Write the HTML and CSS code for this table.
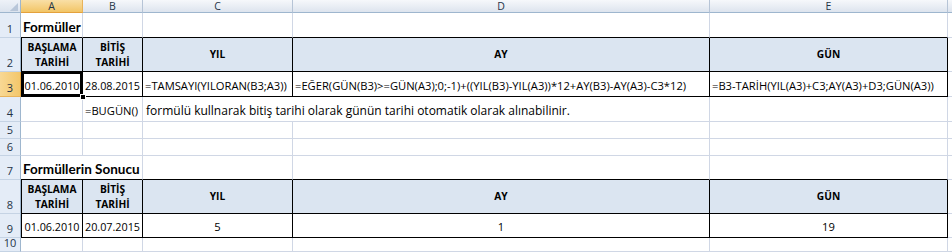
FILE: index.html
```html
<!DOCTYPE html>
<html lang="tr">
<head>
<meta charset="utf-8">
<title>Formüller</title>
<link rel="stylesheet" href="styles.css">
</head>
<body>
<div class="sheet">
  <div class="corner"><svg class="tri" width="10" height="10" viewBox="0 0 10 10"><polygon points="10,1 10,10 1,10" fill="#b8c6d9"/></svg></div>
  <div class="ch selh">A</div>
  <div class="ch">B</div>
  <div class="ch">C</div>
  <div class="ch">D</div>
  <div class="ch">E</div>
  <div class="ch"></div>

  <div class="rh">1</div>
  <div class="c title above">Formüller</div>
  <div class="c above"></div>
  <div class="c above"></div>
  <div class="c above"></div>
  <div class="c above"></div>
  <div class="c"></div>

  <div class="rh">2</div>
  <div class="c t l th">BAŞLAMA<br>TARİHİ</div>
  <div class="c t th">BİTİŞ<br>TARİHİ</div>
  <div class="c t th">YIL</div>
  <div class="c t th">AY</div>
  <div class="c t th">GÜN</div>
  <div class="c"></div>

  <div class="rh selh">3</div>
  <div class="c t l active ctr date">01.06.2010<span class="handle"></span></div>
  <div class="c t ctr date">28.08.2015</div>
  <div class="c t">=TAMSAYI(YILORAN(B3;A3))</div>
  <div class="c t">=EĞER(GÜN(B3)&gt;=GÜN(A3);0;-1)+((YIL(B3)-YIL(A3))*12+AY(B3)-AY(A3)-C3*12)</div>
  <div class="c t">=B3-TARİH(YIL(A3)+C3;AY(A3)+D3;GÜN(A3))</div>
  <div class="c"></div>

  <div class="rh">4</div>
  <div class="c"></div>
  <div class="c">=BUGÜN()</div>
  <div class="c span2 note">formülü kullnarak bitiş tarihi olarak günün tarihi otomatik olarak alınabilinir.</div>
  <div class="c"></div>
  <div class="c"></div>

  <div class="rh">5</div>
  <div class="c"></div><div class="c"></div><div class="c"></div><div class="c"></div><div class="c"></div><div class="c"></div>

  <div class="rh">6</div>
  <div class="c"></div><div class="c"></div><div class="c"></div><div class="c"></div><div class="c"></div><div class="c"></div>

  <div class="rh">7</div>
  <div class="c title above span2">Formüllerin Sonucu</div>
  <div class="c above"></div>
  <div class="c above"></div>
  <div class="c above"></div>
  <div class="c"></div>

  <div class="rh">8</div>
  <div class="c t l th">BAŞLAMA<br>TARİHİ</div>
  <div class="c t th">BİTİŞ<br>TARİHİ</div>
  <div class="c t th">YIL</div>
  <div class="c t th">AY</div>
  <div class="c t th">GÜN</div>
  <div class="c"></div>

  <div class="rh">9</div>
  <div class="c t l ctr date">01.06.2010</div>
  <div class="c t ctr date">20.07.2015</div>
  <div class="c t ctr">5</div>
  <div class="c t ctr">1</div>
  <div class="c t ctr">19</div>
  <div class="c"></div>

  <div class="rh">10</div>
  <div class="c"></div><div class="c"></div><div class="c"></div><div class="c"></div><div class="c"></div><div class="c"></div>
</div>
</body>
</html>
```

FILE: styles.css
```css
* { box-sizing: border-box; }
html, body { margin: 0; padding: 0; background: #fff; }
body { width: 952px; height: 252px; overflow: hidden; font-family: "Open Sans", "Liberation Sans", sans-serif; }

.sheet {
  display: grid;
  grid-template-columns: 21px 62px 60px 150px 417px 238px 1fr;
  grid-template-rows: 13px 25px 34px 25px 25px 17px 17px 24px 34px 24px 14px;
  width: 952px;
  height: 252px;
  font-size: 11.2px;
  color: #000;
}

.corner {
  background: linear-gradient(#eef2f8, #dbe3ee);
  border-right: 1px solid #9eb6ce;
  border-bottom: 1px solid #9eb6ce;
  display: flex;
  align-items: flex-end;
  justify-content: flex-end;
  padding: 0 2px 1px 0;
}
.tri { display: block; width: 9px; height: 9px; }

.ch {
  background: linear-gradient(#f6f8fb, #dde4ee);
  border-right: 1px solid #b6c4d6;
  border-bottom: 1px solid #9eb6ce;
  display: flex;
  align-items: center;
  justify-content: center;
  font-size: 10.5px;
  line-height: 12px;
  color: #243447;
}
.rh {
  background: #e4ecf7;
  border-right: 1px solid #9eb6ce;
  border-bottom: 1px solid #c5d3e4;
  display: flex;
  align-items: flex-end;
  justify-content: center;
  font-size: 11px;
  line-height: 14px;
  color: #243447;
  padding-bottom: 1px;
}
.ch.selh {
  background: linear-gradient(#f9dfa6, #f2c566);
  border-bottom-color: #e4a13c;
  border-right-color: #e9b35a;
}
.rh.selh {
  background: linear-gradient(90deg, #f8d894, #f3c76b);
  border-bottom-color: #e9b35a;
  border-right-color: #e4a13c;
}

.c {
  border-right: 1px solid #d0d7e5;
  border-bottom: 1px solid #d0d7e5;
  white-space: nowrap;
  overflow: hidden;
  display: flex;
  align-items: flex-end;
  padding: 0 2px 3px 2px;
  line-height: 15px;
  position: relative;
}
.span2 { grid-column: span 2; }

.above { border-bottom-color: #000; }

.t { border-right-color: #000; border-bottom-color: #000; }
.t.l { border-left: 1px solid #000; }

.th {
  background: #dbe5f1;
  font-weight: bold;
  font-size: 10.2px;
  line-height: 15px;
  justify-content: center;
  align-items: center;
  text-align: center;
  padding: 0 1px;
}
.ctr { justify-content: center; padding-left: 1px; padding-right: 1px; }
.date { font-size: 10.8px; }

.title {
  font-family: Lato, "Open Sans", sans-serif;
  font-weight: bold;
  font-size: 13.5px;
  padding-left: 2px;
  padding-bottom: 2px;
}

.note { padding-left: 3px; font-size: 12px; }

.active {
  box-shadow: inset 0 0 0 2px #000;
  overflow: visible;
}
.handle {
  position: absolute;
  right: -4px;
  bottom: -4px;
  width: 6px;
  height: 6px;
  background: #000;
  border: 1px solid #fff;
  z-index: 2;
}
```
